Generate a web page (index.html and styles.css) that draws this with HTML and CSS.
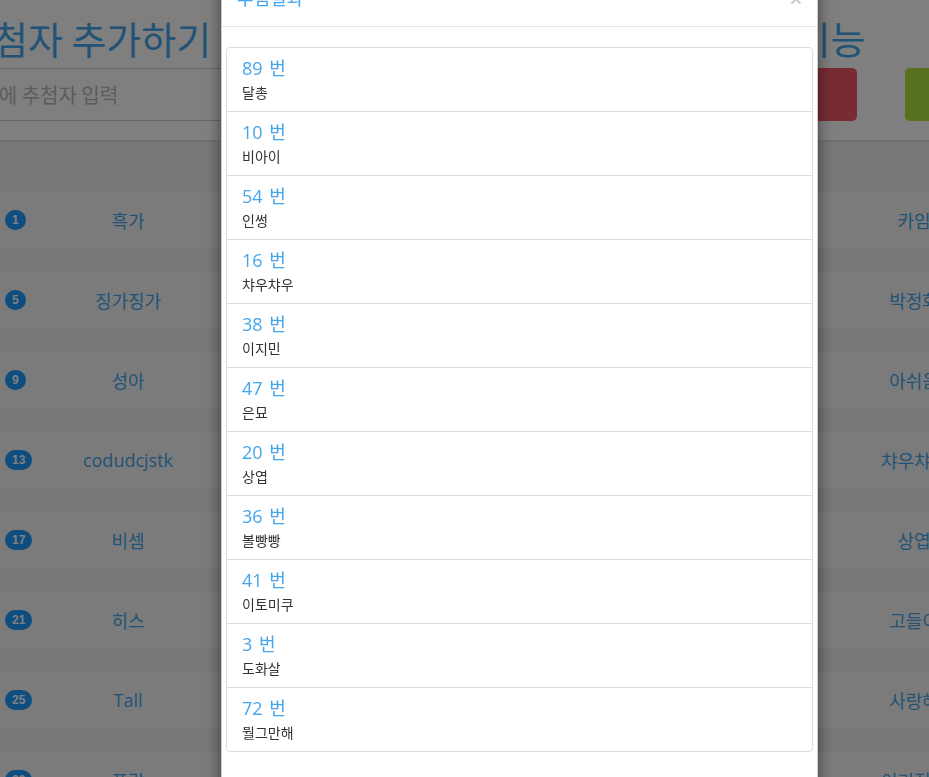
FILE: index.html
```html
<!doctype html>
<html>
<head>
	<meta charset="utf-8">
	<meta name="viewport" content="width=device-width, initial-scale=1.0">
	<title>추첨기</title>

	<link rel="stylesheet" href="styles.css">
</head>

<body class="modal-open">

	<div class="page">
		<div class="top">
			<div class="add-col">
				<h1 class="title">추첨자 추가하기</h1>
				<input class="name-input" type="text" placeholder="이곳에 추첨자 입력" />
			</div>
			<div class="tool-col">
				<h1 class="title">추첨 기능</h1>
				<div class="tool-buttons">
					<button class="btn btn-red">초기화</button>
					<button class="btn btn-green">추첨하기</button>
				</div>
			</div>
		</div>

		<div class="board">
			<div class="board-row">
				<div class="cell"><span class="badge">1</span><span class="name">흑가</span></div>
				<div class="cell"><span class="badge">2</span><span class="name">달총</span></div>
				<div class="cell"><span class="badge">3</span><span class="name">도화살</span></div>
				<div class="cell"><span class="badge">4</span><span class="name">카임</span></div>
			</div>
			<div class="board-row">
				<div class="cell"><span class="badge">5</span><span class="name">징가징가</span></div>
				<div class="cell"><span class="badge">6</span><span class="name">비아이</span></div>
				<div class="cell"><span class="badge">7</span><span class="name">인썽</span></div>
				<div class="cell"><span class="badge">8</span><span class="name">박정화</span></div>
			</div>
			<div class="board-row">
				<div class="cell"><span class="badge">9</span><span class="name">성아</span></div>
				<div class="cell"><span class="badge">10</span><span class="name">이지민</span></div>
				<div class="cell"><span class="badge">11</span><span class="name">은묘</span></div>
				<div class="cell"><span class="badge">12</span><span class="name">아쉬움</span></div>
			</div>
			<div class="board-row">
				<div class="cell"><span class="badge">13</span><span class="name">codudcjstk</span></div>
				<div class="cell"><span class="badge">14</span><span class="name">볼빵빵</span></div>
				<div class="cell"><span class="badge">15</span><span class="name">이토미쿠</span></div>
				<div class="cell"><span class="badge">16</span><span class="name">챠우챠우</span></div>
			</div>
			<div class="board-row">
				<div class="cell"><span class="badge">17</span><span class="name">비셈</span></div>
				<div class="cell"><span class="badge">18</span><span class="name">뭘그만해</span></div>
				<div class="cell"><span class="badge">19</span><span class="name">하루</span></div>
				<div class="cell"><span class="badge">20</span><span class="name">상엽</span></div>
			</div>
			<div class="board-row">
				<div class="cell"><span class="badge">21</span><span class="name">히스</span></div>
				<div class="cell"><span class="badge">22</span><span class="name">모모</span></div>
				<div class="cell"><span class="badge">23</span><span class="name">라온</span></div>
				<div class="cell"><span class="badge">24</span><span class="name">고들이</span></div>
			</div>
			<div class="board-row">
				<div class="cell"><span class="badge">25</span><span class="name">Tall</span></div>
				<div class="cell"><span class="badge">26</span><span class="name">별빛</span></div>
				<div class="cell"><span class="badge">27</span><span class="name">루미</span></div>
				<div class="cell"><span class="badge">28</span><span class="name">사랑해</span></div>
			</div>
			<div class="board-row">
				<div class="cell"><span class="badge">29</span><span class="name">포랑</span></div>
				<div class="cell"><span class="badge">30</span><span class="name">다온</span></div>
				<div class="cell"><span class="badge">31</span><span class="name">초코</span></div>
				<div class="cell"><span class="badge">32</span><span class="name">이기적인</span></div>
			</div>
		</div>
	</div>

	<div class="modal-backdrop"></div>

	<div class="modal">
		<div class="modal-header">
			<button class="close">&times;</button>
			<h4 class="modal-title">추첨결과</h4>
		</div>
		<div class="modal-body">
			<div class="list-group">
				<div class="list-item"><div class="pick-no">89 번</div><div class="pick-name">달총</div></div>
				<div class="list-item"><div class="pick-no">10 번</div><div class="pick-name">비아이</div></div>
				<div class="list-item"><div class="pick-no">54 번</div><div class="pick-name">인썽</div></div>
				<div class="list-item"><div class="pick-no">16 번</div><div class="pick-name">챠우챠우</div></div>
				<div class="list-item"><div class="pick-no">38 번</div><div class="pick-name">이지민</div></div>
				<div class="list-item"><div class="pick-no">47 번</div><div class="pick-name">은묘</div></div>
				<div class="list-item"><div class="pick-no">20 번</div><div class="pick-name">상엽</div></div>
				<div class="list-item"><div class="pick-no">36 번</div><div class="pick-name">볼빵빵</div></div>
				<div class="list-item"><div class="pick-no">41 번</div><div class="pick-name">이토미쿠</div></div>
				<div class="list-item"><div class="pick-no">3 번</div><div class="pick-name">도화살</div></div>
				<div class="list-item"><div class="pick-no">72 번</div><div class="pick-name">뭘그만해</div></div>
			</div>
		</div>
	</div>

</body>
</html>
```

FILE: styles.css
```css
* {
	box-sizing: border-box;
}
body {
	margin: 0;
	background: #fff;
	font-family: "Open Sans", "Noto Sans CJK KR", sans-serif;
	color: #333;
}
body.modal-open {
	height: 100vh;
	overflow: hidden;
}

/* page under the modal (scrolled a bit to the right) */
.page {
	width: 1100px;
	margin-left: -40px;
}
.top {
	display: flex;
}
.add-col {
	width: 757px;
}
.tool-col {
	flex: 1;
}
.title {
	margin: 14px 0 6px 0;
	font-size: 38px;
	line-height: 48px;
	font-weight: normal;
	color: #44a6ee;
	font-family: "Noto Sans CJK KR", sans-serif;
	white-space: nowrap;
}
.add-col .title {
	margin-left: -2px;
}
.name-input {
	display: block;
	width: 700px;
	height: 53px;
	padding: 0 2px;
	border: 0;
	border-top: 1px solid #ccc;
	border-bottom: 1px solid #ccc;
	font-size: 20px;
	font-family: "Noto Sans CJK KR", sans-serif;
	outline: none;
}
.name-input::placeholder {
	color: #b8b8b8;
}
.tool-buttons {
	display: flex;
	gap: 48px;
}
.btn {
	width: 140px;
	height: 53px;
	border: 0;
	border-radius: 5px;
	color: #fff;
	font-size: 16px;
	font-family: "Noto Sans CJK KR", sans-serif;
}
.btn-red {
	background: #f25766;
}
.btn-green {
	background: #aee33c;
}

.board {
	margin-top: 19px;
	margin-left: 37px;
	padding-top: 50px;
	border-top: 2px solid #e2e2e2;
	background: #eee;
	display: flex;
	flex-direction: column;
	gap: 24px;
}
.board-row {
	height: 56px;
	display: grid;
	grid-template-columns: repeat(4, 262px);
	background: #f7f7f7;
}
.cell {
	display: grid;
	grid-template-columns: 32px 1fr 32px;
	align-items: center;
	padding: 0 8px;
}
.badge {
	justify-self: start;
	min-width: 20px;
	height: 20px;
	padding: 0 7px;
	border-radius: 10px;
	background: #1c9bff;
	color: #fff;
	font-size: 12px;
	font-weight: bold;
	line-height: 20px;
	text-align: center;
	font-family: "Liberation Sans", sans-serif;
}
.name {
	text-align: center;
	font-size: 18px;
	color: #44a6ee;
	white-space: nowrap;
}

/* modal */
.modal-backdrop {
	position: fixed;
	top: 0;
	right: 0;
	bottom: 0;
	left: 0;
	background: rgba(0, 0, 0, 0.5);
}
.modal {
	position: fixed;
	top: -30px;
	left: 221px;
	width: 597px;
	padding-bottom: 40px;
	background: #fff;
	border: 1px solid rgba(0, 0, 0, 0.2);
	border-radius: 6px;
	box-shadow: 0 5px 15px rgba(0, 0, 0, 0.5);
}
.modal-header {
	padding: 15px;
	border-bottom: 1px solid #e5e5e5;
}
.modal-title {
	margin: 0;
	font-size: 18px;
	line-height: 25px;
	font-weight: normal;
	color: #44a6ee;
}
.close {
	float: right;
	padding: 0;
	border: 0;
	background: transparent;
	font-size: 21px;
	font-weight: bold;
	line-height: 25px;
	color: #000;
	opacity: 0.2;
}
.modal-body {
	padding: 20px 4px;
}
.list-group {
	border: 1px solid #ddd;
	border-radius: 4px;
}
.list-item {
	padding: 8px 15px 8px 15px;
	border-bottom: 1px solid #ddd;
}
.list-item:last-child {
	border-bottom: 0;
}
.pick-no {
	font-size: 18px;
	line-height: 24px;
	color: #44a6ee;
	word-spacing: 2px;
}
.pick-name {
	margin-top: 3px;
	font-size: 14px;
	line-height: 20px;
	color: #333;
}
```
